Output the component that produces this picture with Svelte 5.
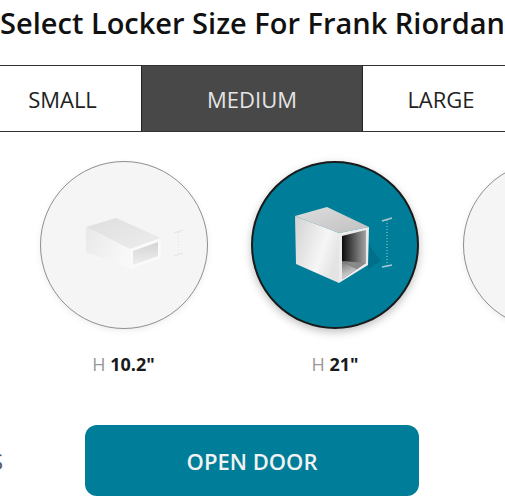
<script>
  const tabs = [
    { label: "SMALL", active: false },
    { label: "MEDIUM", active: true },
    { label: "LARGE", active: false }
  ];
</script>

<div class="page">
  <h1>Select Locker Size For Frank Riordan</h1>

  <div class="tabs">
    {#each tabs as tab}
      <div class="tab" class:active={tab.active}>{tab.label}</div>
    {/each}
  </div>

  <div class="lockers">
    <div class="locker">
      <div class="circle"></div>
      <div class="height">&nbsp;</div>
    </div>

    <div class="locker">
      <div class="circle">
        <svg class="box" width="168" height="168" viewBox="0 0 168 168">
          <defs>
            <linearGradient id="flat-side" x1="0" y1="0" x2="1" y2="0.4">
              <stop offset="0" stop-color="#e8e8e8" />
              <stop offset="1" stop-color="#f8f8f8" />
            </linearGradient>
            <linearGradient id="flat-top" x1="0" y1="0" x2="1" y2="1">
              <stop offset="0" stop-color="#dedede" />
              <stop offset="1" stop-color="#ededed" />
            </linearGradient>
            <linearGradient id="flat-in" x1="0" y1="0" x2="0" y2="1">
              <stop offset="0" stop-color="#d4d4d4" />
              <stop offset="1" stop-color="#eeeeee" />
            </linearGradient>
          </defs>
          <polygon points="47,66 77,57 122,77 91,88" fill="url(#flat-top)" />
          <polygon points="47,66 91,88 91,108 47,91" fill="url(#flat-side)" />
          <polygon points="91,88 122,77 122,97 91,108" fill="#fafafa" />
          <polygon points="94,90 119,81 119,95 94,104" fill="url(#flat-in)" />
          <g stroke="#e4e4e4" fill="none">
            <path d="M135 72 L144 69 M135 95 L144 92" />
            <path d="M139.5 71 L139.5 94" stroke-dasharray="1 2" />
          </g>
        </svg>
      </div>
      <div class="height">H <b>10.2"</b></div>
    </div>

    <div class="locker selected">
      <div class="circle">
        <svg class="box" width="168" height="168" viewBox="0 0 168 168">
          <defs>
            <linearGradient id="tall-side" x1="0" y1="0" x2="1" y2="0.5">
              <stop offset="0" stop-color="#d2d2d2" />
              <stop offset="0.7" stop-color="#f6f6f6" />
              <stop offset="1" stop-color="#e4e4e4" />
            </linearGradient>
            <linearGradient id="tall-top" x1="0" y1="0" x2="1" y2="1">
              <stop offset="0" stop-color="#dedede" />
              <stop offset="1" stop-color="#c0c0c0" />
            </linearGradient>
            <linearGradient id="tall-in" x1="0" y1="0" x2="1" y2="0">
              <stop offset="0" stop-color="#0c0c0c" />
              <stop offset="1" stop-color="#a4a4a4" />
            </linearGradient>
            <linearGradient id="tall-floor" x1="0" y1="0" x2="0.3" y2="1">
              <stop offset="0" stop-color="#707070" />
              <stop offset="1" stop-color="#e0e0e0" />
            </linearGradient>
          </defs>
          <polygon points="118,84 130,100 117,108" fill="#006f8a" />
          <polygon points="44,55 76,46 118,66 88,72" fill="url(#tall-top)" />
          <polygon points="44,55 88,72 88,122 45,103" fill="url(#tall-side)" />
          <polygon points="88,72 118,66 117,104 88,122" fill="#ececec" />
          <polygon points="91,75 115,69 115,102 91,118" fill="url(#tall-in)" />
          <polygon points="91,100 106,108 91,118" fill="url(#tall-floor)" />
          <polygon points="91,100 115,102 106,108" fill="#8a8a8a" />
          <g stroke="#a9c9d3" fill="none">
            <path d="M131 60 L141 57 M131 106 L141 104" stroke-width="1.5" />
            <path d="M136 59 L136 105" stroke-dasharray="1 2" />
          </g>
        </svg>
      </div>
      <div class="height">H <b>21"</b></div>
    </div>

    <div class="locker">
      <div class="circle"></div>
      <div class="height">&nbsp;</div>
    </div>
  </div>

  <div class="actions">
    <div class="cancel">LOCKERS</div>
    <div class="open">OPEN DOOR</div>
  </div>
</div>

<style>
  :global(body) {
    background: #fff;
  }

  .page {
    width: 505px;
    height: 496px;
    overflow: hidden;
    font-family: "Open Sans", sans-serif;
    color: #111;
  }

  h1 {
    margin: 0;
    height: 65px;
    padding-top: 6px;
    box-sizing: border-box;
    font-size: 29px;
    line-height: 33px;
    font-weight: 600;
    white-space: nowrap;
    text-align: center;
  }

  .tabs {
    display: grid;
    grid-template-columns: 157px 222px 156px;
    height: 67px;
    margin-left: -16px;
    width: 535px;
    box-sizing: border-box;
    border-top: 1.5px solid #333;
    border-bottom: 1.5px solid #333;
  }

  .tab {
    display: flex;
    align-items: center;
    justify-content: center;
    font-size: 22px;
    color: #222;
  }

  .tab.active {
    background: #484848;
    color: #e4e4e4;
    border-left: 1px solid #222;
    border-right: 1px solid #222;
  }

  .lockers {
    display: flex;
    gap: 43.5px;
    margin-left: -172px;
    padding-top: 29px;
  }

  .locker {
    flex: none;
    width: 168px;
    display: flex;
    flex-direction: column;
    align-items: center;
  }

  .circle {
    width: 168px;
    height: 168px;
    box-sizing: border-box;
    border: 1.5px solid #8f8f8f;
    border-radius: 50%;
    background: #f5f5f5;
    box-shadow: 0 2px 6px rgba(0, 0, 0, 0.07);
    position: relative;
  }

  .selected .circle {
    background: #007d98;
    border: 2px solid #1a1a1a;
    box-shadow: 0 3px 8px rgba(0, 0, 0, 0.25);
  }

  .box {
    position: absolute;
    left: -1.5px;
    top: -1.5px;
    filter: blur(0.5px);
  }

  .selected .box {
    left: -2px;
    top: -2px;
  }

  .height {
    margin-top: 23px;
    font-size: 18px;
    line-height: 25px;
    color: #999;
  }

  .height b {
    color: #1a1a1a;
    font-weight: 700;
  }

  .actions {
    display: flex;
    align-items: center;
    justify-content: flex-end;
    gap: 82px;
    width: 419px;
    margin-top: 48px;
  }

  .cancel {
    flex: none;
    font-size: 22px;
    color: #555;
  }

  .open {
    flex: none;
    width: 334px;
    height: 71px;
    display: flex;
    align-items: center;
    justify-content: center;
    border-radius: 12px;
    background: #007d98;
    color: #f2f2f2;
    font-size: 22px;
    font-weight: 600;
  }
</style>
